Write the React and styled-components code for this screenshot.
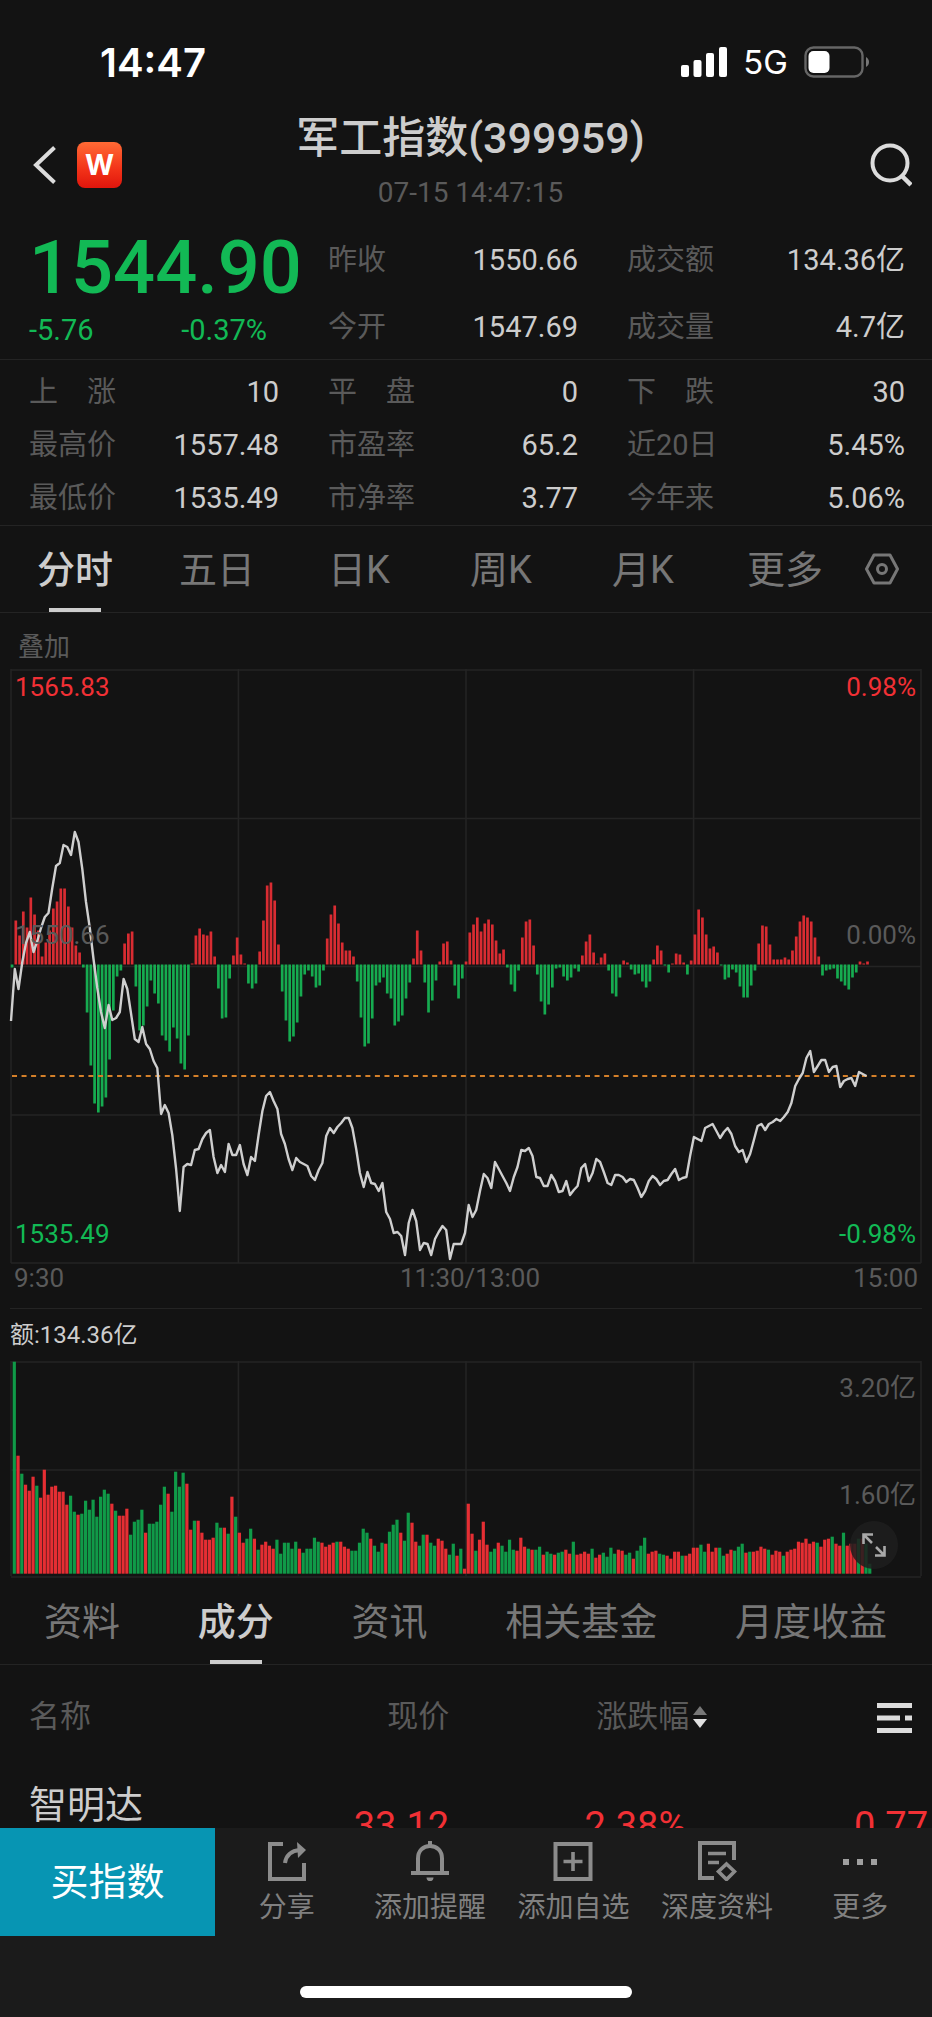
import React from "react";
import styled, { createGlobalStyle } from "styled-components";

const c = {
  bg: "#131313",
  bar: "#1b1b1b",
  line: "#242424",
  text: "#cdcdcd",
  tab: "#777777",
  dim: "#5a5a5a",
  red: "#f13035",
  green: "#12b955",
  teal: "#0795b3",
};

const GlobalStyle = createGlobalStyle`
  * { box-sizing: border-box; }
  body {
    margin: 0;
    background: ${c.bg};
    color: ${c.text};
    font-family: Roboto, "Noto Sans CJK SC", sans-serif;
  }
  button { border: 0; padding: 0; background: none; color: inherit; font: inherit; cursor: pointer; }
  h1, p, dl, dt, dd { margin: 0; font-weight: 400; }
  svg { display: block; }
`;

const Page = styled.div`
  display: flex;
  flex-direction: column;
  height: 100vh;
  background: ${c.bg};
`;

const StatusBar = styled.div`
  display: flex;
  flex: none;
  align-items: center;
  justify-content: space-between;
  height: 108px;
  padding: 16px 62px 0 100px;
  color: #fff;
  font-family: Inter, sans-serif;
`;

const Clock = styled.time`
  font-size: 40px;
  font-weight: 600;
`;

const StatusIcons = styled.div`
  display: flex;
  align-items: center;
  gap: 16px;
  font-size: 33px;
  font-weight: 400;
`;

const Header = styled.header`
  display: flex;
  flex: none;
  align-items: center;
  justify-content: space-between;
  height: 114px;
  padding: 0 20px 0 29px;
`;

const HeaderSide = styled.div`
  display: flex;
  flex: 1;
  align-items: center;
  justify-content: ${(p) => (p.$end ? "flex-end" : "flex-start")};
  gap: 20px;
`;

const BackButton = styled.button`
  && { padding-left: 4px; }
`;

const Logo = styled.a`
  display: flex;
  align-items: center;
  justify-content: center;
  width: 45px;
  height: 46px;
  border-radius: 8px;
  background: linear-gradient(#ff6a35, #f23218 60%, #e0150c);
  color: #fff;
  font: 700 28px/46px Inter, sans-serif;
  text-decoration: none;
`;

const Heading = styled.div`
  text-align: center;
  padding: 5px 0 11px;
`;

const Title = styled.h1`
  font-size: 43px;
  line-height: 50px;
  && { font-weight: 500; }
`;

const Stamp = styled.p`
  margin-top: 12px;
  color: ${c.dim};
  font-size: 28px;
  line-height: 36px;
`;

const Scroll = styled.main`
  flex: 1;
  min-height: 0;
  overflow: hidden auto;
  scrollbar-width: none;
`;

const Columns = styled.section`
  display: grid;
  grid-template-columns: minmax(0, 250fr) minmax(0, 250fr) minmax(0, 278fr);
  column-gap: 49px;
  padding: ${(p) => p.$pad};
  border-bottom: 1px solid ${c.line};
`;

const Price = styled.p`
  color: ${c.green};
  font-size: 74px;
  line-height: 60px;
  white-space: nowrap;
  && { font-weight: 500; }
`;

const Change = styled.p`
  display: flex;
  justify-content: space-between;
  margin-top: 14px;
  padding-right: 12px;
  color: ${c.green};
  font-size: 29px;
  line-height: 36px;
`;

const Facts = styled.dl`
  display: flex;
  flex-direction: column;
  gap: ${(p) => (p.$loose ? 31 : 17)}px;
  ${(p) => p.$loose && "padding-top: 4px;"}
`;

const Fact = styled.div`
  display: flex;
  justify-content: space-between;
  font-size: 29px;
  line-height: 36px;
  dt { color: ${c.dim}; white-space: pre; }
`;

const Tabs = styled.nav`
  display: flex;
  height: 87px;
  padding: ${(p) => p.$pad};
  border-bottom: 1px solid ${c.line};
  ${(p) => p.$spread && "justify-content: space-between;"}
`;

const Tab = styled.button`
  position: relative;
  ${(p) => p.$fill && "flex: 1;"}
  && {
    padding-top: 2px;
    color: ${(p) => (p.$active ? c.text : c.tab)};
    font-size: 38px;
    font-weight: ${(p) => (p.$active ? 500 : 400)};
    line-height: 46px;
  }
  &::after {
    content: "";
    display: ${(p) => (p.$active ? "block" : "none")};
    position: absolute;
    left: 50%;
    bottom: 0;
    width: 52px;
    height: 4px;
    margin-left: -26px;
    background: ${c.text};
  }
`;

const GearButton = styled.button`
  display: flex;
  align-items: center;
  justify-content: center;
  width: 52px;
`;

const Overlay = styled.button`
  display: block;
  height: 56px;
  && {
    padding: 6px 18px 0;
    color: ${c.dim};
    font-size: 26px;
  }
`;

const Plot = styled.div`
  position: relative;
  height: ${(p) => p.$height}px;
  svg.plot { width: 100%; height: 100%; }
`;

const ScaleRow = styled.div`
  position: absolute;
  top: ${(p) => p.$top}px;
  left: 15px;
  right: 16px;
  display: flex;
  justify-content: space-between;
  color: ${(p) => p.$color || c.dim};
  font-size: 26px;
  line-height: 28px;
  ${(p) => p.$end && "justify-content: flex-end;"}
`;

const Axis = styled.div`
  display: grid;
  grid-template-columns: 1fr auto 1fr;
  height: 43px;
  padding: 0 14px;
  color: ${c.dim};
  font-size: 26px;
  line-height: 26px;
  span:nth-child(2) { padding-left: 8px; }
  span:last-child { text-align: right; }
`;

const Turnover = styled.p`
  margin: 0 10px;
  border-top: 1px solid ${c.line};
  font-size: 24px;
  line-height: 52px;
`;

const ExpandButton = styled.button`
  position: absolute;
  right: 34px;
  bottom: 9px;
  display: flex;
  align-items: center;
  justify-content: center;
  width: 48px;
  height: 48px;
  border-radius: 50%;
  && { background: rgba(30, 30, 30, 0.86); }
`;

const Table = styled.table`
  width: 100%;
  border-collapse: collapse;
  table-layout: fixed;
  text-align: right;
  th, td { padding: 0; }
  th:first-child, td:first-child { text-align: left; padding-left: 29px; }
  thead th {
    height: 100px;
    padding-top: 3px;
    color: ${c.dim};
    font-size: 31px;
    font-weight: 400;
    line-height: 40px;
  }
`;

const NameCell = styled.td`
  vertical-align: top;
  font-size: 38px;
  line-height: 46px;
  && { padding-top: 17px; }
`;

const NumCell = styled.td`
  height: 122px;
  color: ${c.red};
  font-size: 38px;
  line-height: 46px;
  && { padding-right: ${(p) => p.$inset || 0}px; }
`;

const SortButton = styled.button`
  display: inline-flex;
  align-items: center;
  gap: 3px;
`;

const MenuButton = styled.button`
  vertical-align: middle;
  && { padding-right: 20px; }
`;

const Footer = styled.footer`
  flex: none;
  background: ${c.bar};
`;

const Actions = styled.div`
  display: flex;
  height: 108px;
`;

const BuyButton = styled.button`
  width: 215px;
  && {
    padding-bottom: 8px;
    background: ${c.teal};
    color: #fff;
    font-size: 38px;
  }
`;

const ActionList = styled.div`
  display: grid;
  flex: 1;
  grid-template-columns: repeat(5, 1fr);
`;

const Action = styled.button`
  display: flex;
  flex-direction: column;
  align-items: center;
  gap: 10px;
  && {
    padding-top: 13px;
    color: #808080;
    font-size: 28px;
    line-height: 34px;
  }
`;

const HomeArea = styled.div`
  height: 81px;
  padding-top: 50px;
  &::before {
    content: "";
    display: block;
    width: 332px;
    height: 12px;
    margin: 0 auto;
    border-radius: 6px;
    background: #fff;
  }
`;

// Height of the index momentum bar of each minute: above zero is red, below is green.
const momentum = [
  -3, 44, 29, 53, 37, 67, 50, 34, 8, 22, 34, 56, 63, 76, 76, 58, 37, 19, 12, -3, -48, -101, -139, -148, -142, -133,
  -95, -46, -12, -6, 21, 31, 33, -22, -66, -61, -42, -16, -29, -39, -71, -76, -87, -63, -74, -99, -105, -71, 1, 29,
  36, 30, 29, 33, 8, -24, -54, -53, -14, 9, 27, 10, 1, -19, -24, -19, 13, 44, 79, 82, 64, 20, -27, -56, -77, -72,
  -58, -32, -10, -6, -12, -23, -21, -6, 26, 50, 59, 41, 22, 14, 14, 8, -17, -53, -82, -79, -54, -21, -18, -13, -29,
  -34, -61, -57, -51, -34, -18, 6, 34, 14, -18, -48, -36, -16, 3, 21, 23, 4, -21, -34, -14, 3, 32, 40, 47, 33, 41,
  45, 40, 24, 11, 15, -3, -20, -27, -6, 27, 43, 45, 19, -10, -37, -50, -40, -23, -4, -3, -12, -16, -13, -4, -7, 9,
  23, 30, 12, 1, 7, 11, -6, -29, -32, -13, 4, 2, -5, -10, -9, -17, -23, -17, 5, 19, 14, -1, -8, 1, 11, 10, 2, -10,
  4, 30, 55, 47, 30, 16, 18, 12, -1, -15, -13, -5, -8, -22, -33, -33, -21, -6, 21, 39, 38, 20, 5, 5, 5, 7, 5, 14,
  28, 43, 49, 47, 43, 27, 8, -11, -6, -5, -4, -14, -17, -21, -25, -13, -8, 3, 1, 3,
];

// Price of each minute, as a distance below the top of the plot.
const price = [
  351, 299, 319, 292, 273, 262, 282, 271, 258, 247, 243, 218, 196, 193, 175, 177, 185, 162, 172, 199, 232, 258, 289,
  318, 342, 358, 335, 350, 348, 342, 309, 319, 344, 369, 372, 357, 374, 379, 391, 398, 444, 435, 443, 465, 499, 541,
  497, 494, 495, 480, 479, 469, 463, 460, 487, 503, 495, 502, 474, 485, 485, 475, 494, 505, 487, 491, 465, 441, 426,
  422, 431, 439, 464, 474, 489, 500, 488, 492, 494, 496, 506, 510, 500, 493, 466, 458, 463, 457, 453, 448, 448, 458,
  479, 503, 517, 502, 513, 514, 521, 513, 542, 549, 563, 562, 566, 585, 553, 540, 551, 580, 573, 574, 585, 569, 562,
  556, 560, 589, 574, 574, 574, 563, 535, 547, 540, 521, 504, 508, 518, 492, 499, 506, 513, 521, 507, 497, 480, 481,
  478, 486, 507, 508, 516, 516, 505, 511, 522, 521, 511, 525, 520, 516, 498, 494, 511, 503, 489, 492, 502, 513, 515,
  505, 505, 507, 512, 509, 510, 518, 527, 521, 511, 506, 509, 515, 511, 510, 504, 499, 510, 508, 507, 486, 467, 469,
  471, 458, 456, 454, 461, 468, 462, 458, 464, 476, 482, 480, 492, 484, 470, 456, 454, 460, 454, 452, 449, 451, 447,
  442, 433, 416, 409, 403, 388, 381, 402, 396, 390, 390, 402, 397, 396, 417, 411, 409, 408, 416, 402, 404, 406,
];

// Turnover of each minute: positive for a rise, negative for a fall.
const turnover = [
  -212, 118, -100, 89, 83, 97, -88, 76, 104, 79, 87, 88, 82, 82, 69, -78, -62, 59, -60, -73, -64, -74, -57, -77, -84,
  -80, 70, -63, 58, 58, 65, -39, -52, -54, -64, 41, -50, -50, -52, -69, -87, 80, -62, -102, -87, -101, 90, 44, -53,
  53, 41, 34, 34, 36, -51, -46, 46, -40, 77, -57, 41, 31, -35, -45, 35, -24, 29, 32, 28, 25, -34, -20, -31, -31, -25,
  -32, 25, -21, -25, -25, -36, -32, 31, 27, 29, 31, -32, 32, 27, 25, -23, -23, -31, -45, -41, 35, -28, -22, -31, 30,
  -42, -49, -54, 41, -33, -61, 51, 32, -28, -39, 39, -31, -28, 35, 33, 25, -19, -30, 18, -25, 5, 70, 40, -23, 34, 52,
  29, -22, -25, 31, -28, -22, -34, -24, 23, 36, 27, -25, 24, -24, -27, 19, -22, -20, 19, -21, -22, 24, 20, -32, 19,
  20, 22, 20, -25, 16, 19, -21, -17, -26, -20, 24, 23, -19, -21, 15, -23, -28, -36, 20, 22, 23, -20, -19, 18, 15, 22,
  22, -18, 18, 20, 26, 26, -29, -22, 30, 22, 26, -26, -18, 20, 24, -23, -27, -30, 21, -22, 22, 23, 27, 25, -24, 19,
  23, 22, -18, 22, 24, 25, 32, 31, 35, 30, 32, -31, 27, 34, 35, -37, 30, 28, -41, 28, 30, 30, -35, 35, -30, -10,
];

const STEP = 3.752;

function Grid({ rows, bottom }) {
  return (
    <g stroke={c.line} strokeWidth="1.6">
      {rows.map((y) => <line key={y} x1="11" x2="921" y1={y} y2={y} />)}
      {[11, 238.4, 466, 693.6, 921].map((x) => <line key={x} x1={x} x2={x} y1="-1" y2={bottom} />)}
    </g>
  );
}

function PriceChart() {
  return (
    <svg className="plot" viewBox="0 -1 932 596" preserveAspectRatio="none" role="img" aria-label="分时走势">
      <Grid rows={[0, 148.5, 296.5, 445, 593]} bottom={593} />
      {momentum.map((v, i) => (
        <rect
          key={i}
          x={10.7 + i * STEP}
          width="2.7"
          y={v > 0 ? 294.5 - v : 294.5}
          height={Math.abs(v)}
          fill={v > 0 ? "#d92c32" : "#16ab50"}
        />
      ))}
      <line x1="12" x2="917" y1="406" y2="406" stroke="#d4802a" strokeWidth="1.8" strokeDasharray="5 4.55" />
      <polyline
        points={price.map((y, i) => `${(11 + i * STEP).toFixed(1)},${y}`).join(" ")}
        fill="none"
        stroke="#cfcfcf"
        strokeWidth="2.4"
        strokeLinejoin="round"
      />
    </svg>
  );
}

function TurnoverChart() {
  return (
    <svg className="plot" viewBox="0 0 932 217" preserveAspectRatio="none" role="img" aria-label="成交额">
      <Grid rows={[1, 109, 216]} bottom={215} />
      {turnover.map((v, i) => (
        <rect
          key={i}
          x={12.7 + i * STEP}
          width="3.2"
          y={212.7 - Math.abs(v)}
          height={Math.abs(v)}
          fill={v > 0 ? "#e52e33" : "#109a48"}
        />
      ))}
    </svg>
  );
}

const Signal = () => (
  <svg width="46" height="30" viewBox="0 0 46 30" fill="#fff">
    <rect x="0" y="18" width="8" height="12" rx="2" />
    <rect x="12.5" y="13" width="8" height="17" rx="2" />
    <rect x="25" y="6" width="8" height="24" rx="2" />
    <rect x="38" y="0" width="8" height="30" rx="2" />
  </svg>
);

const Battery = () => (
  <svg width="66" height="32" viewBox="0 0 66 32">
    <rect x="1.5" y="1.5" width="57" height="29" rx="8" fill="none" stroke="#666" strokeWidth="2.4" />
    <rect x="4.5" y="5" width="21" height="22" rx="5" fill="#fff" />
    <path d="M62 11v10c4-2 4-8 0-10z" fill="#777" />
  </svg>
);

const BackIcon = () => (
  <svg width="24" height="38" viewBox="0 0 24 38" fill="none" stroke="#dcdcdc" strokeWidth="4">
    <path d="M21.500 1.500L3 19l18.500 17.500" />
  </svg>
);

const SearchIcon = () => (
  <svg width="42" height="44" viewBox="0 0 42 44" fill="none" stroke="#dcdcdc" strokeWidth="4">
    <circle cx="20" cy="20" r="17.500" />
    <path d="M31 32l10 10" strokeWidth="4.500" />
  </svg>
);

const GearIcon = () => (
  <svg width="34" height="34" viewBox="0 0 34 34" fill="none" stroke={c.tab} strokeWidth="3">
    <path d="M9 3h16l7.500 14L25 31H9L1.500 17z" strokeLinejoin="round" />
    <circle cx="17" cy="17" r="4.500" />
  </svg>
);

const ExpandIcon = () => (
  <svg width="24" height="24" viewBox="0 0 24 24" fill="none" stroke="#a8a8a8" strokeWidth="2.600">
    <path d="M1.500 11V1.500H11M1.500 1.500l8.500 8.500M22.500 13v9.500H13M22.500 22.500L14 14" />
  </svg>
);

const SortIcon = () => (
  <svg width="16" height="24" viewBox="0 0 16 24">
    <path d="M8 1l7 9H1z" fill="#777" />
    <path d="M8 23l7-9H1z" fill="#e0e0e0" />
  </svg>
);

const MenuIcon = () => (
  <svg width="35" height="32" viewBox="0 0 35 32" fill="#dcdcdc">
    <path d="M0 1h35v5H0zM0 13.500h23v5H0zM28 13.500h7v5h-7zM0 26h35v5H0z" />
  </svg>
);

const iconProps = { width: 40, height: 40, viewBox: "0 0 40 40", fill: "none", stroke: "#8c8c8c", strokeWidth: 4 };

const ShareIcon = () => (
  <svg {...iconProps}>
    <path d="M16 3H3v35h34V22" />
    <path d="M18 22C19 15 24 9.500 33 9" />
    <path d="M30 1l9 8-8 8z" fill="#8c8c8c" stroke="none" />
  </svg>
);

const BellIcon = () => (
  <svg {...iconProps}>
    <path d="M1 32h38M8 31V17.500C8 10 13 5 20 5s12 5 12 12.500V31M20 0v5" />
    <path d="M16.500 36.500h7c0 5-7 5-7 0z" fill="#8c8c8c" stroke="none" />
  </svg>
);

const AddIcon = () => (
  <svg {...iconProps}>
    <path d="M2.500 3h35v35h-35z" />
    <path d="M20 11v19M10.500 20.500h19" strokeWidth="3.600" />
  </svg>
);

const ResearchIcon = () => (
  <svg {...iconProps}>
    <path d="M17 37H3V2h34v17" />
    <path d="M11 12.500h18M11 21.500h11" strokeWidth="3.400" />
    <path d="M29.500 23l8 7.500-8 8-8-8z" strokeWidth="3.600" />
  </svg>
);

const MoreIcon = () => (
  <svg {...iconProps} stroke="none" fill="#a0a0a0">
    <path d="M3 18h6v6H3zM17 18h6v6h-6zM31 18h6v6h-6z" />
  </svg>
);

const headFacts = [
  [["昨收", "1550.66"], ["今开", "1547.69"]],
  [["成交额", "134.36亿"], ["成交量", "4.7亿"]],
];

const statFacts = [
  [["上　涨", "10"], ["最高价", "1557.48"], ["最低价", "1535.49"]],
  [["平　盘", "0"], ["市盈率", "65.2"], ["市净率", "3.77"]],
  [["下　跌", "30"], ["近20日", "5.45%"], ["今年来", "5.06%"]],
];

const actions = [
  ["分享", ShareIcon],
  ["添加提醒", BellIcon],
  ["添加自选", AddIcon],
  ["深度资料", ResearchIcon],
  ["更多", MoreIcon],
];

function FactList({ items, loose }) {
  return (
    <Facts $loose={loose}>
      {items.map(([label, value]) => (
        <Fact key={label}>
          <dt>{label}</dt>
          <dd>{value}</dd>
        </Fact>
      ))}
    </Facts>
  );
}

export default function App() {
  return (
    <Page>
      <GlobalStyle />
      <StatusBar>
        <Clock>14:47</Clock>
        <StatusIcons>
          <Signal />
          5G
          <Battery />
        </StatusIcons>
      </StatusBar>
      <Header>
        <HeaderSide>
          <BackButton aria-label="返回"><BackIcon /></BackButton>
          <Logo href="#home">W</Logo>
        </HeaderSide>
        <Heading>
          <Title>军工指数(399959)</Title>
          <Stamp>07-15 14:47:15</Stamp>
        </Heading>
        <HeaderSide $end>
          <button aria-label="搜索"><SearchIcon /></button>
        </HeaderSide>
      </Header>

      <Scroll>
        <Columns $pad="16px 27px 11px 29px">
          <div>
            <Price>1544.90</Price>
            <Change>
              <span>-5.76</span>
              <span>-0.37%</span>
            </Change>
          </div>
          {headFacts.map((items) => <FactList key={items[0][0]} items={items} loose />)}
        </Columns>
        <Columns $pad="14px 27px 9px 29px">
          {statFacts.map((items) => <FactList key={items[0][0]} items={items} />)}
        </Columns>

        <Tabs $pad="0 24px 0 4px">
          {["分时", "五日", "日K", "周K", "月K", "更多"].map((label, i) => (
            <Tab key={label} $fill $active={i === 0}>{label}</Tab>
          ))}
          <GearButton aria-label="设置"><GearIcon /></GearButton>
        </Tabs>

        <Overlay>叠加</Overlay>
        <Plot $height={596}>
          <PriceChart />
          <ScaleRow $top={4} $color={c.red}><span>1565.83</span><span>0.98%</span></ScaleRow>
          <ScaleRow $top={252}><span>1550.66</span><span>0.00%</span></ScaleRow>
          <ScaleRow $top={551} $color={c.green}><span>1535.49</span><span>-0.98%</span></ScaleRow>
        </Plot>
        <Axis><span>9:30</span><span>11:30/13:00</span><span>15:00</span></Axis>

        <Turnover>额:134.36亿</Turnover>
        <Plot $height={217}>
          <TurnoverChart />
          <ScaleRow $top={13} $end>3.20亿</ScaleRow>
          <ScaleRow $top={120} $end>1.60亿</ScaleRow>
          <ExpandButton aria-label="全屏"><ExpandIcon /></ExpandButton>
        </Plot>

        <Tabs $pad="0 45px 0 44px" $spread>
          {["资料", "成分", "资讯", "相关基金", "月度收益"].map((label, i) => (
            <Tab key={label} $active={i === 1}>{label}</Tab>
          ))}
        </Tabs>

        <Table>
          <colgroup>
            <col style={{ width: "24%" }} />
            <col style={{ width: "24.2%" }} />
            <col style={{ width: "27.8%" }} />
            <col style={{ width: "24%" }} />
          </colgroup>
          <thead>
            <tr>
              <th>名称</th>
              <th>现价</th>
              <th><SortButton>涨跌幅<SortIcon /></SortButton></th>
              <th><MenuButton aria-label="选择列"><MenuIcon /></MenuButton></th>
            </tr>
          </thead>
          <tbody>
            <tr>
              <NameCell>智明达</NameCell>
              <NumCell>33.12</NumCell>
              <NumCell $inset={22}>2.38%</NumCell>
              <NumCell $inset={4}>0.77</NumCell>
            </tr>
          </tbody>
        </Table>
      </Scroll>

      <Footer>
        <Actions>
          <BuyButton>买指数</BuyButton>
          <ActionList>
            {actions.map(([label, Icon]) => (
              <Action key={label}><Icon />{label}</Action>
            ))}
          </ActionList>
        </Actions>
        <HomeArea />
      </Footer>
    </Page>
  );
}
